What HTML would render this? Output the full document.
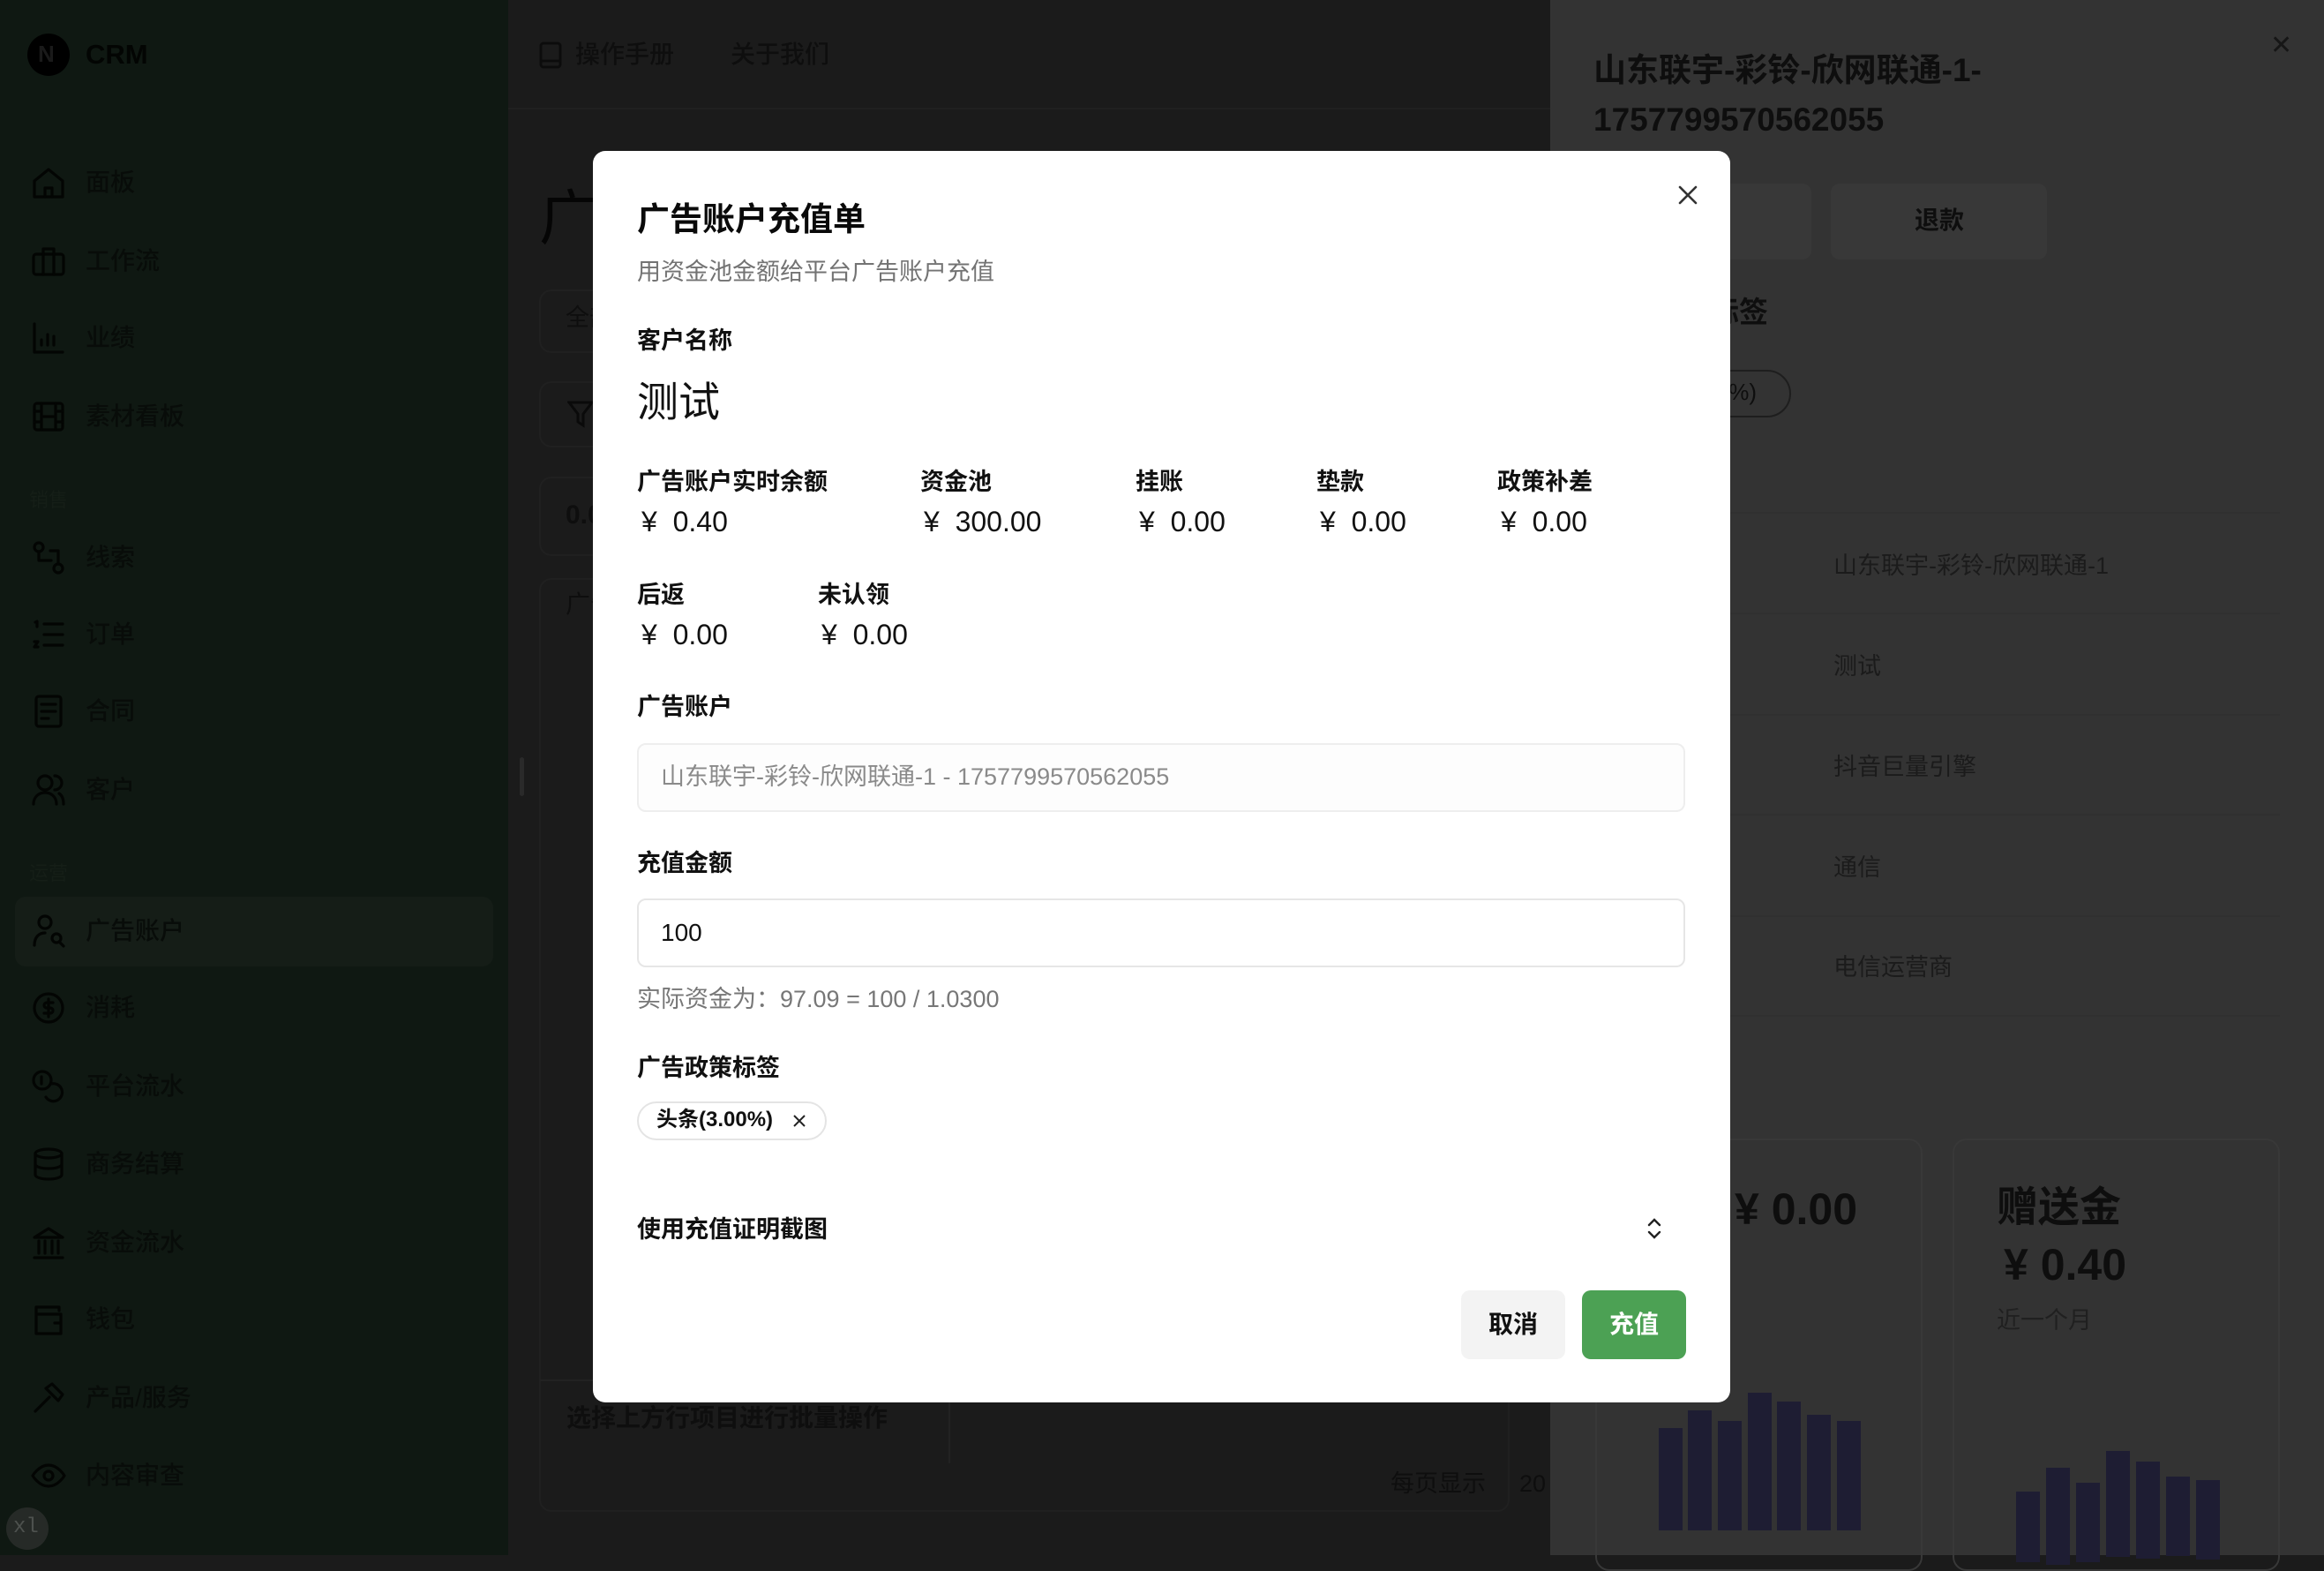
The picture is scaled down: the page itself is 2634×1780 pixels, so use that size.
<!DOCTYPE html>
<html><head><meta charset="utf-8"><style>
*{margin:0;padding:0;box-sizing:border-box}
body{width:2634px;height:1762px;overflow:hidden;position:relative;background:#1b1b1b;font-family:"Liberation Sans","Noto Sans CJK SC",sans-serif;}
.a{position:absolute;white-space:nowrap;line-height:1.2}
.sb{position:absolute;left:0;top:0;width:576px;height:1762px;background:#0f1812}
.nav{position:absolute;left:97px;font-size:28px;color:#080c09;font-weight:500}
.ic{position:absolute;left:35px;width:40px;height:40px}
.ic *{fill:none;stroke:#030503;stroke-width:3.2;stroke-linecap:round;stroke-linejoin:round}
.sec{position:absolute;left:33px;font-size:22px;color:#151e17}
.rp{position:absolute;left:1757px;top:0;width:877px;height:1762px;background:#333}
.dk{color:#0e0e0e}
.card{position:absolute;border:2px solid #202020;border-radius:14px;background:#1b1b1b}
.modal{position:absolute;left:672px;top:171px;width:1289px;height:1418px;background:#fff;border-radius:14px}
.lbl{position:absolute;font-size:27px;font-weight:600;color:#111}
.val{position:absolute;font-size:32px;color:#111}
.inp{position:absolute;left:50px;width:1188px;height:78px;border:2px solid #e6e6e6;border-radius:10px}
.bar{position:absolute;width:27px;background:#1e1d33}
</style></head><body>

<div class="sb">
  <div class="a" style="left:31px;top:38px;width:48px;height:48px;border-radius:50%;background:#000"></div>
  <div class="a" style="left:43px;top:46px;font-size:26px;color:#1a1a1a;font-weight:bold">N</div>
  <div class="a" style="left:97px;top:43px;font-size:31px;font-weight:bold;color:#030503">CRM</div>

  <svg class="ic" style="top:187px" viewBox="0 0 40 40"><path d="M4 18L20 5l16 13v18H4z"/><path d="M16 36V26h8v10"/></svg>
  <div class="a nav" style="top:190px">面板</div>
  <svg class="ic" style="top:276px" viewBox="0 0 40 40"><rect x="3" y="12" width="34" height="23" rx="3"/><path d="M14 12V6h12v6M14 12v23M26 12v23"/></svg>
  <div class="a nav" style="top:279px">工作流</div>
  <svg class="ic" style="top:363px" viewBox="0 0 40 40"><path d="M4 4v32h32M12 28v-6M19 28V16M26 28v-10"/></svg>
  <div class="a nav" style="top:366px">业绩</div>
  <svg class="ic" style="top:452px" viewBox="0 0 40 40"><rect x="4" y="5" width="32" height="30" rx="3"/><path d="M12 5v30M28 5v30M4 14h8M4 26h8M28 14h8M28 26h8M12 20h16"/></svg>
  <div class="a nav" style="top:455px">素材看板</div>
  <div class="a sec" style="top:554px">销售</div>
  <svg class="ic" style="top:612px" viewBox="0 0 40 40"><circle cx="9" cy="8" r="5"/><circle cx="31" cy="32" r="5"/><path d="M9 13v10h14M31 27V12H22"/></svg>
  <div class="a nav" style="top:615px">线索</div>
  <svg class="ic" style="top:699px" viewBox="0 0 40 40"><path d="M15 8h21M15 20h21M15 32h21M5 6l2-1v6M4 28h4l-4 6h4"/></svg>
  <div class="a nav" style="top:702px">订单</div>
  <svg class="ic" style="top:786px" viewBox="0 0 40 40"><rect x="6" y="3" width="28" height="34" rx="3"/><path d="M12 12h16M12 20h16M12 28h8"/></svg>
  <div class="a nav" style="top:789px">合同</div>
  <svg class="ic" style="top:875px" viewBox="0 0 40 40"><circle cx="16" cy="12" r="8"/><path d="M3 36c0-8 6-13 13-13s13 5 13 13M27 4a8 8 0 0 1 0 16M32 24c3 2 5 6 5 12"/></svg>
  <div class="a nav" style="top:878px">客户</div>
  <div class="a sec" style="top:977px">运营</div>
  <div class="a" style="left:17px;top:1016px;width:542px;height:79px;background:#151d17;border-radius:12px"></div>
  <svg class="ic" style="top:1035px" viewBox="0 0 40 40"><circle cx="16" cy="10" r="7"/><path d="M4 36c0-9 5-14 12-14M24 28a5 5 0 1 0 10 0a5 5 0 1 0-10 0M33 33l4 4"/></svg>
  <div class="a nav" style="top:1038px">广告账户</div>
  <svg class="ic" style="top:1122px" viewBox="0 0 40 40"><circle cx="20" cy="20" r="16"/><path d="M25 14h-7a3 3 0 0 0 0 6h4a3 3 0 0 1 0 6h-7M20 10v20"/></svg>
  <div class="a nav" style="top:1125px">消耗</div>
  <svg class="ic" style="top:1211px" viewBox="0 0 40 40"><circle cx="13" cy="13" r="10"/><path d="M23 17a10 10 0 1 1-6 15M12 9v8"/></svg>
  <div class="a nav" style="top:1214px">平台流水</div>
  <svg class="ic" style="top:1299px" viewBox="0 0 40 40"><ellipse cx="20" cy="8" rx="15" ry="5"/><path d="M5 8v24c0 3 7 5 15 5s15-2 15-5V8M5 20c0 3 7 5 15 5s15-2 15-5"/></svg>
  <div class="a nav" style="top:1302px">商务结算</div>
  <svg class="ic" style="top:1388px" viewBox="0 0 40 40"><path d="M4 14L20 4l16 10zM4 37h32M9 18v14M16 18v14M24 18v14M31 18v14"/></svg>
  <div class="a nav" style="top:1391px">资金流水</div>
  <svg class="ic" style="top:1475px" viewBox="0 0 40 40"><path d="M32 10V6H6v30h28V14H8M27 24h6"/></svg>
  <div class="a nav" style="top:1478px">钱包</div>
  <svg class="ic" style="top:1564px" viewBox="0 0 40 40"><path d="M5 35l16-16M17 9l7-5 12 12-5 7z"/></svg>
  <div class="a nav" style="top:1567px">产品/服务</div>
  <svg class="ic" style="top:1652px" viewBox="0 0 40 40"><path d="M2 20s7-12 18-12 18 12 18 12-7 12-18 12S2 20 2 20z"/><circle cx="20" cy="20" r="5"/></svg>
  <div class="a nav" style="top:1655px">内容审查</div>
  <div class="a" style="left:7px;top:1708px;width:48px;height:48px;border-radius:50%;background:#262a27"></div>
  <div class="a" style="left:15px;top:1717px;font-size:24px;color:#4d514e;font-family:'Liberation Mono',monospace">xl</div>
</div>

<div class="a" style="left:576px;top:122px;width:1181px;height:2px;background:#202020"></div>
<svg class="a" style="left:611px;top:47px" width="28" height="32" viewBox="0 0 28 32"><rect x="2" y="2" width="22" height="27" rx="3" fill="none" stroke="#0c0c0c" stroke-width="3"/><path d="M2 22h22" stroke="#0c0c0c" stroke-width="3"/></svg>
<div class="a dk" style="left:652px;top:45px;font-size:28px;font-weight:500">操作手册</div>
<div class="a dk" style="left:828px;top:45px;font-size:28px;font-weight:500">关于我们</div>
<div class="a" style="left:611px;top:208px;font-size:68px;color:#050505">广告账户</div>
<div class="card" style="left:611px;top:328px;width:1100px;height:72px"></div>
<div class="a dk" style="left:641px;top:344px;font-size:27px">全部</div>
<div class="card" style="left:611px;top:432px;width:1100px;height:75px"></div>
<svg class="a" style="left:643px;top:453px" width="30" height="32" viewBox="0 0 30 32"><path d="M2 3h26L18 16v13l-6-4V16z" fill="none" stroke="#0a0a0a" stroke-width="3"/></svg>
<div class="card" style="left:611px;top:540px;width:1100px;height:90px"></div>
<div class="a dk" style="left:641px;top:566px;font-size:30px;font-weight:bold">0.00</div>
<div class="card" style="left:611px;top:655px;width:1100px;height:1058px"></div>
<div class="a dk" style="left:641px;top:668px;font-size:28px">广告账户</div>
<div class="a" style="left:612px;top:1563px;width:1098px;height:2px;background:#222"></div>
<div class="a dk" style="left:642px;top:1590px;font-size:28px;font-weight:600">选择上方行项目进行批量操作</div>
<div class="a" style="left:1075px;top:1563px;width:2px;height:95px;background:#222"></div>
<div class="a dk" style="left:1576px;top:1665px;font-size:27px">每页显示</div>
<div class="a dk" style="left:1722px;top:1665px;font-size:27px">20</div>
<div class="a" style="left:589px;top:858px;width:5px;height:44px;background:#2a2a2a;border-radius:3px"></div>

<div class="rp"></div>
<div class="a dk" style="left:1806px;top:52px;font-size:37px;font-weight:bold;line-height:1.5">山东联宇-彩铃-欣网联通-1-<br>1757799570562055</div>
<div class="a" style="left:2573px;top:34px;font-size:30px;color:#161616">✕</div>
<div class="a" style="left:1810px;top:208px;width:243px;height:86px;background:#383838;border-radius:10px"></div>
<div class="a" style="left:2075px;top:208px;width:245px;height:86px;background:#383838;border-radius:10px"></div>
<div class="a dk" style="left:2170px;top:233px;font-size:28px;font-weight:600">退款</div>
<div class="a dk" style="left:1806px;top:334px;font-size:33px;font-weight:bold">广告政策标签</div>
<div class="a" style="left:1806px;top:419px;width:224px;height:54px;border:2px solid #1e1e1e;border-radius:27px"></div>
<div class="a dk" style="left:1848px;top:429px;font-size:26px">头条(3.00%)</div>
<div class="a" style="left:1806px;top:580px;width:778px;height:2px;background:#303030"></div>
<div class="a" style="left:1806px;top:694px;width:778px;height:2px;background:#303030"></div>
<div class="a" style="left:1806px;top:809px;width:778px;height:2px;background:#303030"></div>
<div class="a" style="left:1806px;top:922px;width:778px;height:2px;background:#303030"></div>
<div class="a" style="left:1806px;top:1037px;width:778px;height:2px;background:#303030"></div>
<div class="a" style="left:1806px;top:1150px;width:778px;height:2px;background:#303030"></div>
<div class="a" style="left:2078px;top:625px;font-size:27px;color:#1b1b1b">山东联宇-彩铃-欣网联通-1</div>
<div class="a" style="left:2078px;top:739px;font-size:27px;color:#1b1b1b">测试</div>
<div class="a" style="left:2078px;top:853px;font-size:27px;color:#1b1b1b">抖音巨量引擎</div>
<div class="a" style="left:2078px;top:967px;font-size:27px;color:#1b1b1b">通信</div>
<div class="a" style="left:2078px;top:1080px;font-size:27px;color:#1b1b1b">电信运营商</div>

<div class="a" style="left:1808px;top:1290px;width:371px;height:490px;border:2px solid #383838;border-radius:16px"></div>
<div class="a" style="left:2213px;top:1290px;width:371px;height:490px;border:2px solid #383838;border-radius:16px"></div>
<div class="a dk" style="left:1850px;top:1340px;font-size:50px;font-weight:bold">消耗</div>
<div class="a dk" style="left:1966px;top:1340px;font-size:50px;font-weight:bold">¥ 0.00</div>
<div class="a dk" style="left:2263px;top:1340px;font-size:47px;font-weight:bold">赠送金</div>
<div class="a dk" style="left:2271px;top:1403px;font-size:50px;font-weight:bold">¥ 0.40</div>
<div class="a" style="left:2263px;top:1480px;font-size:27px;color:#202020">近一个月</div>
<div class="bar" style="left:1880px;top:1618px;height:116px"></div>
<div class="bar" style="left:1913px;top:1598px;height:136px"></div>
<div class="bar" style="left:1947px;top:1610px;height:124px"></div>
<div class="bar" style="left:1981px;top:1578px;height:156px"></div>
<div class="bar" style="left:2014px;top:1588px;height:146px"></div>
<div class="bar" style="left:2048px;top:1603px;height:131px"></div>
<div class="bar" style="left:2082px;top:1610px;height:124px"></div>
<div class="bar" style="left:2285px;top:1690px;height:80px"></div>
<div class="bar" style="left:2319px;top:1663px;height:110px"></div>
<div class="bar" style="left:2353px;top:1680px;height:90px"></div>
<div class="bar" style="left:2387px;top:1644px;height:120px"></div>
<div class="bar" style="left:2421px;top:1656px;height:110px"></div>
<div class="bar" style="left:2455px;top:1673px;height:90px"></div>
<div class="bar" style="left:2489px;top:1677px;height:90px"></div>

<div class="modal">
  <svg class="a" style="left:1229px;top:38px" width="24" height="24" viewBox="0 0 24 24"><path d="M3 3l18 18M21 3L3 21" stroke="#333" stroke-width="2.6" stroke-linecap="round"/></svg>
  <div class="a" style="left:50px;top:56px;font-size:37px;font-weight:bold;color:#0a0a0a">广告账户充值单</div>
  <div class="a" style="left:50px;top:121px;font-size:27px;color:#737373">用资金池金额给平台广告账户充值</div>
  <div class="lbl a" style="left:50px;top:199px">客户名称</div>
  <div class="a" style="left:50px;top:257px;font-size:47px;color:#111">测试</div>

  <div class="lbl a" style="left:50px;top:359px">广告账户实时余额</div>
  <div class="lbl a" style="left:371px;top:359px">资金池</div>
  <div class="lbl a" style="left:615px;top:359px">挂账</div>
  <div class="lbl a" style="left:820px;top:359px">垫款</div>
  <div class="lbl a" style="left:1025px;top:359px">政策补差</div>
  <div class="val a" style="left:55px;top:401px">¥&nbsp; 0.40</div>
  <div class="val a" style="left:375px;top:401px">¥&nbsp; 300.00</div>
  <div class="val a" style="left:619px;top:401px">¥&nbsp; 0.00</div>
  <div class="val a" style="left:824px;top:401px">¥&nbsp; 0.00</div>
  <div class="val a" style="left:1029px;top:401px">¥&nbsp; 0.00</div>

  <div class="lbl a" style="left:50px;top:487px">后返</div>
  <div class="lbl a" style="left:255px;top:487px">未认领</div>
  <div class="val a" style="left:55px;top:529px">¥&nbsp; 0.00</div>
  <div class="val a" style="left:259px;top:529px">¥&nbsp; 0.00</div>

  <div class="lbl a" style="left:50px;top:614px">广告账户</div>
  <div class="inp" style="top:671px;background:#fdfdfd;border-color:#eee"></div>
  <div class="a" style="left:77px;top:693px;font-size:27px;color:#8a8a8a">山东联宇-彩铃-欣网联通-1 - 1757799570562055</div>

  <div class="lbl a" style="left:50px;top:791px">充值金额</div>
  <div class="inp" style="top:847px"></div>
  <div class="a" style="left:77px;top:869px;font-size:28px;color:#111">100</div>
  <div class="a" style="left:50px;top:945px;font-size:27px;color:#777">实际资金为：97.09 = 100 / 1.0300</div>

  <div class="lbl a" style="left:50px;top:1023px">广告政策标签</div>
  <div class="a" style="left:50px;top:1077px;width:215px;height:44px;border:2px solid #e4e4e4;border-radius:22px"></div>
  <div class="a" style="left:72px;top:1084px;font-size:24px;font-weight:600;color:#111">头条(3.00%)</div>
  <svg class="a" style="left:226px;top:1091px" width="16" height="16" viewBox="0 0 16 16"><path d="M2 2l12 12M14 2L2 14" stroke="#222" stroke-width="2"/></svg>

  <div class="lbl a" style="left:50px;top:1206px">使用充值证明截图</div>
  <svg class="a" style="left:1194px;top:1207px" width="18" height="28" viewBox="0 0 18 28"><path d="M3 10l6-6 6 6M3 18l6 6 6-6" fill="none" stroke="#222" stroke-width="2.4" stroke-linecap="round"/></svg>

  <div class="a" style="left:984px;top:1291px;width:118px;height:78px;background:#f3f3f3;border-radius:10px"></div>
  <div class="a" style="left:1015px;top:1313px;font-size:28px;font-weight:600;color:#111">取消</div>
  <div class="a" style="left:1121px;top:1291px;width:118px;height:78px;background:#4ca154;border-radius:10px"></div>
  <div class="a" style="left:1152px;top:1313px;font-size:28px;font-weight:600;color:#fff">充值</div>
</div>
</body></html>
